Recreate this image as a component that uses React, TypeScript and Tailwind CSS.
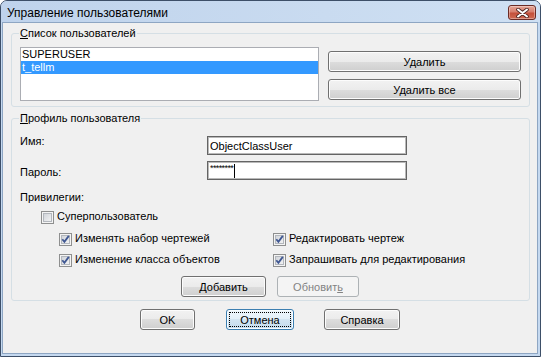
import type { ReactNode } from "react";

type BtnKind = "normal" | "focused" | "disabled";

function Btn({ children, kind = "normal", className = "" }: { children: ReactNode; kind?: BtnKind; className?: string }) {
  const skin =
    kind === "disabled"
      ? "border-[#adb2b5] bg-[#f4f4f4] text-[#838383]"
      : kind === "focused"
        ? "border-[#3c7fb1] bg-[linear-gradient(#eef6fc_0%,#e3eff8_50%,#d3e5f2_50%,#c4dcee_100%)] p-[2px] shadow-[inset_0_0_0_1px_#f8fcfe]"
        : "border-[#707070] bg-[linear-gradient(#f2f2f2_0%,#ebebeb_50%,#dddddd_50%,#cfcfcf_100%)] shadow-[inset_0_0_0_1px_#fcfcfc]";
  return (
    <div className={`flex h-[21px] shrink-0 items-center justify-center rounded-[3px] border ${skin} ${className}`}>
      {kind === "focused" ? (
        <span className="flex h-full w-full items-center justify-center border border-dotted border-black">{children}</span>
      ) : (
        children
      )}
    </div>
  );
}

function Check({ checked, label, className = "" }: { checked?: boolean; label: string; className?: string }) {
  return (
    <div className={`flex items-start ${className}`}>
      <span className="mt-[2px] flex h-[13px] w-[13px] shrink-0 items-center justify-center border border-[#8e8f8f] bg-[#f4f4f4]">
        <span className="flex h-[9px] w-[9px] bg-[linear-gradient(135deg,#cdd1d7,#f6f6f6)] shadow-[inset_0_0_0_1px_#b3b7bd]">
          {checked ? (
            <svg width="9" height="9" viewBox="0 0 9 9">
              <path d="M1.3 4.3 L3.4 6.9 L7.8 0.9" fill="none" stroke="#3f5792" strokeWidth="1.8" />
            </svg>
          ) : null}
        </span>
      </span>
      <span className="ml-[3px] whitespace-nowrap">{label}</span>
    </div>
  );
}

function CloseButton() {
  return (
    <div className="ml-auto mr-[4px] mt-[4px] flex h-[15px] w-[28px] items-center justify-center rounded-[3px] border border-[#6b2b25] bg-[linear-gradient(#e6a596_0%,#d7806f_45%,#c4503b_55%,#cf6a52_100%)] shadow-[inset_0_0_0_1px_rgba(255,255,255,0.35)]">
      <svg width="13" height="10" viewBox="0 0 13 10">
        <path d="M2 1.5 L11 8.5 M11 1.5 L2 8.5" stroke="#4a2420" strokeWidth="3.6" strokeLinecap="round" />
        <path d="M2 1.5 L11 8.5 M11 1.5 L2 8.5" stroke="#ffffff" strokeWidth="2" strokeLinecap="round" />
      </svg>
    </div>
  );
}

export default function App() {
  return (
    <div className="h-[357px] w-[541px] bg-white font-['Liberation_Sans',Arial,sans-serif] text-[11px] leading-[14px] text-black">
      <div className="flex h-full flex-col rounded-t-[7px] border border-[#3d4f68] bg-[#c5d9f0]">
        {/* title bar */}
        <div className="flex h-[21px] shrink-0 rounded-t-[6px] bg-[linear-gradient(90deg,#bfd3ec,#c9dbf0_60%,#cfe0f3)]">
          <span className="ml-[6px] mt-[5px] text-[12px] leading-[15px]">Управление пользователями</span>
          <CloseButton />
        </div>

        {/* client */}
        <div className="mb-[2px] ml-[1px] mr-[2px] flex flex-1 flex-col border border-[#8ea6c3] bg-[#f0f0f0]">
          <fieldset className="ml-[8px] mr-[7px] mt-[3px] rounded-[3px] border border-[#d5dfe5] pb-[5px] pl-[8px] pr-[8px] pt-[7px]">
            <legend className="-ml-[1px] px-[1px] leading-[14px]">
              <span className="underline">С</span>писок пользователей
            </legend>
            <div className="flex">
              <div className="h-[54px] w-[299px] border border-[#abadb3] bg-white leading-[13px]">
                <div className="h-[13px] pl-[1px]">SUPERUSER</div>
                <div className="h-[13px] bg-[#3399ff] pl-[1px] text-white">t_tellm</div>
              </div>
              <div className="ml-[9px] flex w-[193px] flex-col gap-[7px] pt-[4px]">
                <Btn>Удалить</Btn>
                <Btn>Удалить все</Btn>
              </div>
            </div>
          </fieldset>

          <fieldset className="ml-[8px] mr-[7px] mt-[4px] rounded-[3px] border border-[#d5dfe5] pb-[3px] pl-[8px] pr-[8px] pt-[11px]">
            <legend className="-ml-[1px] px-[1px] leading-[14px]">
              <span className="underline">П</span>рофиль пользователя
            </legend>
            <div className="flex">
              <div className="w-[187px]">
                <div className="-mt-[2px]">Имя:</div>
                <div className="mt-[17px]">Пароль:</div>
              </div>
              <div className="flex flex-col gap-[6px]">
                <div className="flex h-[19px] w-[200px] items-center border border-[#646464] bg-white pl-[2px] shadow-[inset_0_0_0_1px_#b9b9b9]">
                  ObjectClassUser
                </div>
                <div className="flex h-[19px] w-[200px] items-center border border-[#646464] bg-white pl-[2px] shadow-[inset_0_0_0_1px_#b9b9b9]">
                  <span className="-mt-[4px] text-[9px] leading-[9px] tracking-[-0.6px]">********</span>
                  <span className="ml-[1px] h-[14px] w-[1px] bg-black" />
                </div>
              </div>
            </div>

            <div className="mt-[10px]">Привилегии:</div>
            <Check className="ml-[21px] mt-[5px]" label="Суперпользователь" />
            <div className="ml-[39px] mt-[7px] flex">
              <Check className="w-[214px]" checked label="Изменять набор чертежей" />
              <Check checked label="Редактировать чертеж" />
            </div>
            <div className="ml-[39px] mt-[6px] flex">
              <Check className="w-[214px]" checked label="Изменение класса объектов" />
              <Check checked label="Запрашивать для редактирования" />
            </div>

            <div className="ml-[161px] mt-[9px] flex">
              <Btn className="w-[85px]">
                <span>
                  <span className="underline">Д</span>обавить
                </span>
              </Btn>
              <Btn kind="disabled" className="ml-[11px] w-[82px]">
                <span>
                  Обновит<span className="underline">ь</span>
                </span>
              </Btn>
            </div>
          </fieldset>

          <div className="ml-[137px] mt-[8px] flex">
            <Btn className="w-[55px]">OK</Btn>
            <Btn kind="focused" className="ml-[31px] w-[68px]">
              Отмена
            </Btn>
            <Btn className="ml-[30px] w-[76px]">Справка</Btn>
          </div>
        </div>
      </div>
    </div>
  );
}
